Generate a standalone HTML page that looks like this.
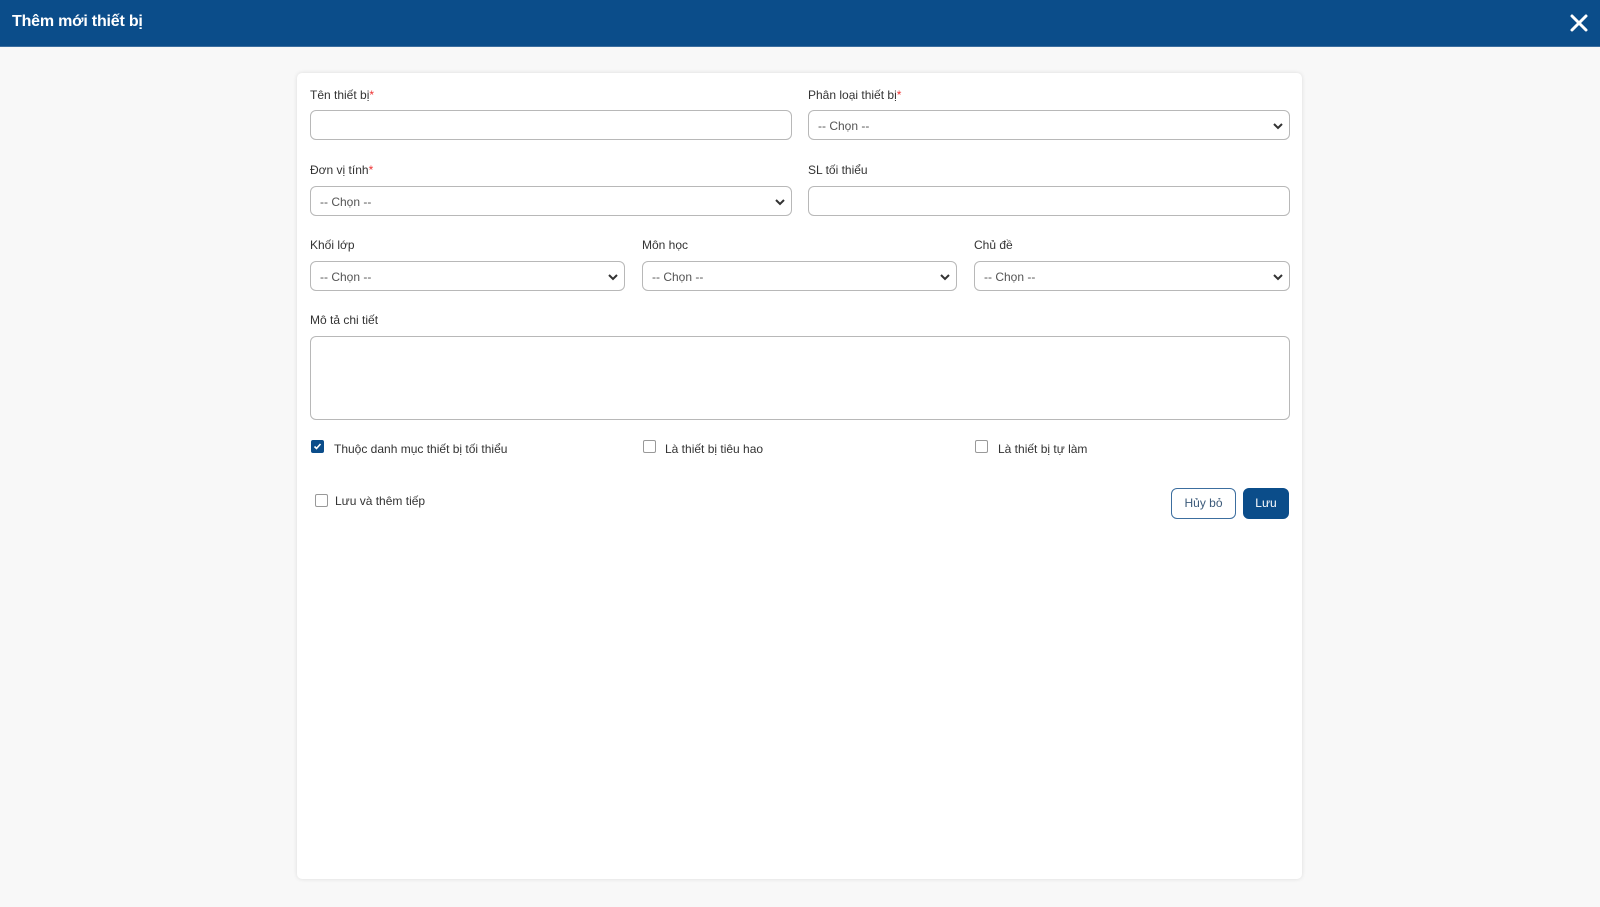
<!DOCTYPE html>
<html><head><meta charset="utf-8"><style>
*{box-sizing:border-box;margin:0;padding:0}
body{width:1600px;height:907px;background:#f8f8f8;font-family:"Liberation Sans",sans-serif;position:relative;overflow:hidden;color:#333}
.hdr{position:absolute;left:0;top:0;width:1600px;height:47px;background:#0b4d8a;border-bottom:1px solid #3c6e9f}
.hdr h1{position:absolute;left:12px;top:13px;font-size:16px;font-weight:bold;color:#fff;letter-spacing:-0.2px}
.x{position:absolute;left:1569px;top:13px}
.card{position:absolute;left:297px;top:73px;width:1005px;height:806px;background:#fff;border-radius:5px;box-shadow:0 0 4px rgba(0,0,0,.12)}
.l{position:absolute;font-size:12px;color:#333}
.l b{color:#e33;font-weight:normal}
.i{position:absolute;border:1px solid #b8b8b8;border-radius:6px;background:#fff;height:30px;font-size:12px;color:#555;padding:8px 0 0 9px}
.i svg{position:absolute;right:6px;top:11px}
.cb{position:absolute;width:13px;height:13px;border:1px solid #999;border-radius:2px;background:#fff}
.cb.on{background:#0b4d8a;border-color:#0b4d8a}
.btn{position:absolute;top:488px;height:31px;border-radius:6px;font-size:12px;text-align:center;line-height:29px}
</style></head><body>
<div class="hdr"><h1>Thêm mới thiết bị</h1>
<svg class="x" width="20" height="20" viewBox="0 0 20 20"><path d="M3 3L17 17M17 3L3 17" stroke="#fff" stroke-width="3" stroke-linecap="round"/></svg></div>
<div class="card"></div>

<div class="l" style="left:310px;top:88px">Tên thiết bị<b>*</b></div>
<div class="i" style="left:310px;top:110px;width:482px"></div>
<div class="l" style="left:808px;top:88px">Phân loại thiết bị<b>*</b></div>
<div class="i" style="left:808px;top:110px;width:482px">-- Chọn --<svg width="10" height="8" viewBox="0 0 10 8"><path d="M1 2l4 4 4-4" stroke="#333" stroke-width="2" fill="none"/></svg></div>

<div class="l" style="left:310px;top:163px">Đơn vị tính<b>*</b></div>
<div class="i" style="left:310px;top:186px;width:482px">-- Chọn --<svg width="10" height="8" viewBox="0 0 10 8"><path d="M1 2l4 4 4-4" stroke="#333" stroke-width="2" fill="none"/></svg></div>
<div class="l" style="left:808px;top:163px">SL tối thiểu</div>
<div class="i" style="left:808px;top:186px;width:482px"></div>

<div class="l" style="left:310px;top:238px">Khối lớp</div>
<div class="i" style="left:310px;top:261px;width:315px">-- Chọn --<svg width="10" height="8" viewBox="0 0 10 8"><path d="M1 2l4 4 4-4" stroke="#333" stroke-width="2" fill="none"/></svg></div>
<div class="l" style="left:642px;top:238px">Môn học</div>
<div class="i" style="left:642px;top:261px;width:315px">-- Chọn --<svg width="10" height="8" viewBox="0 0 10 8"><path d="M1 2l4 4 4-4" stroke="#333" stroke-width="2" fill="none"/></svg></div>
<div class="l" style="left:974px;top:238px">Chủ đề</div>
<div class="i" style="left:974px;top:261px;width:316px">-- Chọn --<svg width="10" height="8" viewBox="0 0 10 8"><path d="M1 2l4 4 4-4" stroke="#333" stroke-width="2" fill="none"/></svg></div>

<div class="l" style="left:310px;top:313px">Mô tả chi tiết</div>
<div class="i" style="left:310px;top:336px;width:980px;height:84px"></div>

<div class="cb on" style="left:311px;top:440px"><svg width="11" height="11" viewBox="0 0 11 11" style="position:absolute;left:0;top:0"><path d="M2.5 5.5l2 2 4-4.5" stroke="#fff" stroke-width="1.6" fill="none"/></svg></div>
<div class="l" style="left:334px;top:442px">Thuộc danh mục thiết bị tối thiểu</div>
<div class="cb" style="left:643px;top:440px"></div>
<div class="l" style="left:665px;top:442px">Là thiết bị tiêu hao</div>
<div class="cb" style="left:975px;top:440px"></div>
<div class="l" style="left:998px;top:442px">Là thiết bị tự làm</div>

<div class="cb" style="left:315px;top:494px"></div>
<div class="l" style="left:335px;top:494px">Lưu và thêm tiếp</div>

<div class="btn" style="left:1171px;width:65px;border:1px solid #3c6e9f;color:#3c5a7a;background:#fff">Hủy bỏ</div>
<div class="btn" style="left:1243px;width:46px;background:#0b4d8a;color:#fff;border:1px solid #0b4d8a">Lưu</div>
</body></html>
